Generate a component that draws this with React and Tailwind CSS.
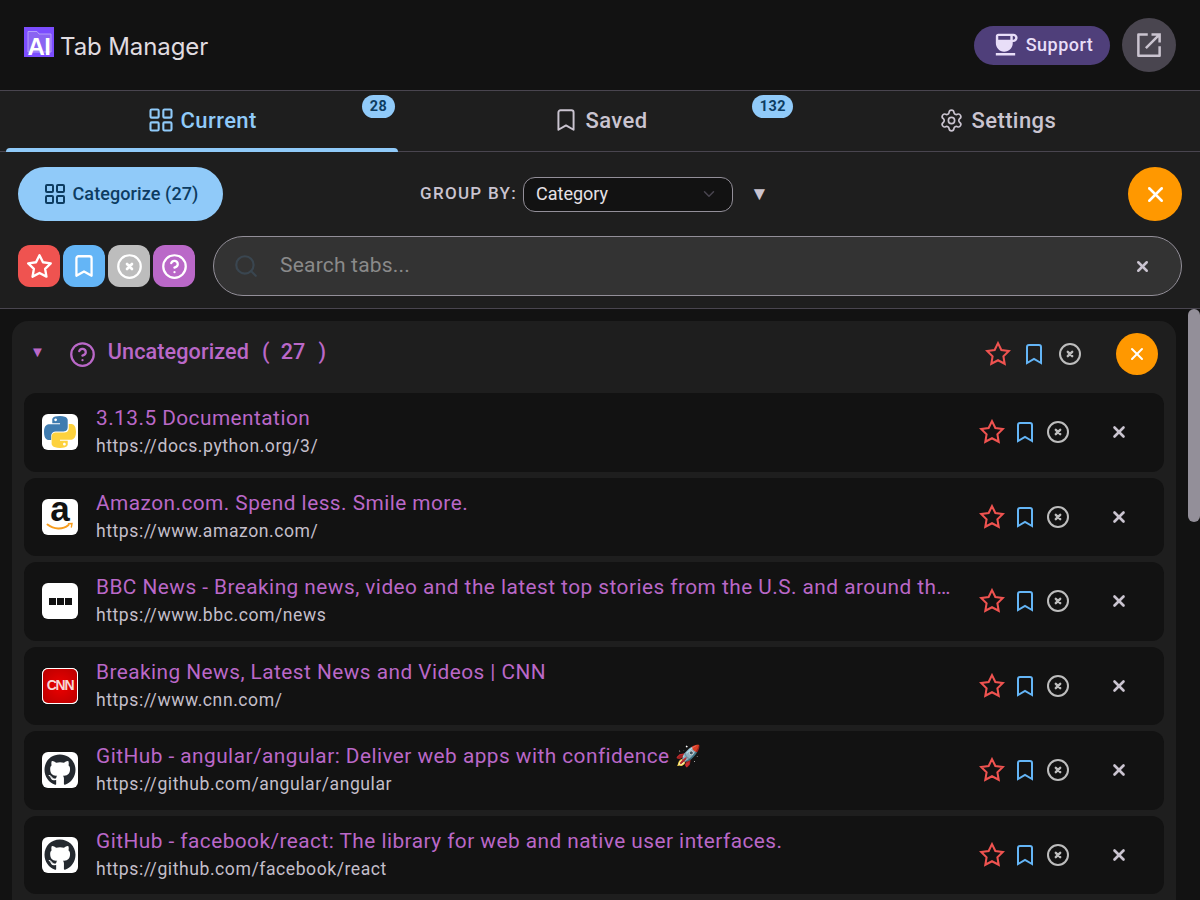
import { LayoutGrid, Bookmark, Settings, CircleHelp, Search, ChevronDown, X } from 'lucide-react';
import { MdCoffee } from 'react-icons/md';
import { FaGithub } from 'react-icons/fa';

// pointed five-corner star, the lucide one has rounded tips
function StarIcon({ className, join = 'miter', width = 1.9 }) {
  return (
    <svg viewBox="0 0 24 24" fill="none" stroke="currentColor" strokeWidth={width} strokeLinejoin={join} className={className}>
      <polygon points="12 2 15.09 8.26 22 9.27 17 14.14 18.18 21.02 12 17.77 5.82 21.02 7 14.14 2 9.27 8.91 8.26" />
    </svg>
  );
}

// circle with the small heavy x used for the "closed" filter
function CircleX({ className }) {
  return (
    <svg viewBox="0 0 24 24" fill="none" stroke="currentColor" strokeWidth="2" strokeLinecap="round" className={className}>
      <circle cx="12" cy="12" r="10" />
      <path d="M9.8 9.8l4.4 4.4M14.2 9.8l-4.4 4.4" strokeWidth="2.4" />
    </svg>
  );
}

function OpenIcon({ className }) {
  return (
    <svg viewBox="0 0 24 24" fill="none" stroke="currentColor" strokeWidth="2" className={className}>
      <path d="M11 3.5H3.5v17h17V13" strokeLinejoin="round" />
      <path d="M20.5 3.5L9.5 14.5M14 3.5h6.5V10" />
    </svg>
  );
}

function Logo() {
  return (
    <div className="relative w-[30px] h-[30px] mb-[6px] bg-[#7c4dff] shrink-0">
      <svg viewBox="0 0 30 30" className="absolute inset-0 w-full h-full" fill="none">
        <path d="M4 25V4.5h9l2 2.5h12v18z" fill="#8a63f2" stroke="#b39dfa" strokeWidth="1" />
      </svg>
      <span className="absolute left-0 right-0 bottom-[-1px] text-center font-['Liberation_Sans',sans-serif] font-bold text-[24px] leading-[22px] tracking-[-0.5px] text-white">AI</span>
    </div>
  );
}

function PythonIcon() {
  return (
    <svg viewBox="0 0 24 24" className="w-[32px] h-[32px]">
      <path fill="#3f7cb0" d="M11.914 0C5.82 0 6.2 2.656 6.2 2.656l.007 2.752h5.814v.826H3.9S0 5.789 0 11.969c0 6.18 3.403 5.96 3.403 5.96h2.03v-2.867s-.109-3.42 3.35-3.42h5.766s3.24.052 3.24-3.148V3.202S18.28 0 11.913 0zM8.708 1.85c.578 0 1.046.47 1.046 1.052 0 .581-.468 1.051-1.046 1.051-.579 0-1.046-.47-1.046-1.051 0-.582.467-1.052 1.046-1.052z" />
      <path fill="#fdd23e" d="M12.087 24c6.092 0 5.712-2.656 5.712-2.656l-.007-2.752h-5.814v-.826h8.123s3.9.445 3.9-5.735c0-6.18-3.404-5.96-3.404-5.96h-2.03v2.867s.109 3.42-3.35 3.42H8.95s-3.24-.052-3.24 3.148v5.292S5.72 24 12.087 24zm3.206-1.85a1.048 1.048 0 01-1.046-1.052c0-.581.468-1.051 1.046-1.051.579 0 1.046.47 1.046 1.051 0 .582-.467 1.052-1.046 1.052z" />
    </svg>
  );
}

function AmazonIcon() {
  return (
    <div className="relative w-full h-full">
      <span className="absolute left-0 right-0 top-0 text-center font-['Liberation_Sans',sans-serif] font-bold text-[35px] leading-[20px] text-[#111]">a</span>
      <svg viewBox="0 0 36 36" className="absolute inset-0 w-full h-full" fill="none">
        <path d="M5.5 25.5c6.5 5 15 5.5 21 .5" stroke="#f79c1c" strokeWidth="2" strokeLinecap="round" />
        <path d="M26.5 24.8l3.5-.3-.6 3.5" stroke="#f79c1c" strokeWidth="1.4" strokeLinecap="round" />
      </svg>
    </div>
  );
}

function BbcIcon() {
  return (
    <div className="w-full h-full flex items-center justify-center gap-[1px]">
      <div className="w-[7px] h-[7px] bg-[#111]" />
      <div className="w-[7px] h-[7px] bg-[#111]" />
      <div className="w-[7px] h-[7px] bg-[#111]" />
    </div>
  );
}

function CnnIcon() {
  return (
    <div className="w-full h-full p-[1px] rounded-md bg-white">
      <div className="w-full h-full rounded-[5px] bg-[radial-gradient(circle,#ee0000,#b80000)] flex items-center justify-center">
        <span className="font-['Liberation_Sans',sans-serif] font-bold text-[14px] tracking-[-1.2px] text-[#f6d5d5]">CNN</span>
      </div>
    </div>
  );
}

const tabs = [
  { title: '3.13.5 Documentation', url: 'https://docs.python.org/3/', icon: <PythonIcon /> },
  { title: 'Amazon.com. Spend less. Smile more.', url: 'https://www.amazon.com/', icon: <AmazonIcon /> },
  { title: 'BBC News - Breaking news, video and the latest top stories from the U.S. and around the world', url: 'https://www.bbc.com/news', icon: <BbcIcon /> },
  { title: 'Breaking News, Latest News and Videos | CNN', url: 'https://www.cnn.com/', icon: <CnnIcon /> },
  { title: 'GitHub - angular/angular: Deliver web apps with confidence 🚀', url: 'https://github.com/angular/angular', icon: <FaGithub className="w-[32px] h-[32px] text-[#24292f]" /> },
  { title: 'GitHub - facebook/react: The library for web and native user interfaces.', url: 'https://github.com/facebook/react', icon: <FaGithub className="w-[32px] h-[32px] text-[#24292f]" /> },
];

function TabRow({ tab }) {
  return (
    <div className="flex items-center h-[78.5px] shrink-0 rounded-xl bg-[#121212] pl-[18px] pr-[36px]">
      <div className="w-9 h-9 rounded-md bg-white flex items-center justify-center shrink-0">
        {tab.icon}
      </div>
      <div className="ml-[18px] min-w-0 w-[858px]">
        <div className="truncate text-[20.8px] leading-[28px] tracking-[0.47px] text-[#ba68c8]">{tab.title}</div>
        <div className="truncate text-[17.6px] leading-[28px] tracking-[0.55px] text-[#c4bfca]">{tab.url}</div>
      </div>
      <div className="ml-auto flex items-center">
        <StarIcon className="w-[26px] h-[26px] text-[#ef5350]" />
        <Bookmark className="w-6 h-6 ml-2 mr-[1px] text-[#64b5f6]" strokeWidth={2} strokeLinejoin="miter" />
        <CircleX className="w-6 h-6 ml-2 text-[#bdbdbd]" />
        <X className="w-[18px] h-[18px] ml-[40px] text-[#cac4d0]" strokeWidth={3.5} />
      </div>
    </div>
  );
}

export default function App() {
  return (
    <div className="relative w-[1200px] h-[900px] overflow-hidden bg-[#121212] font-[Roboto,sans-serif] flex flex-col">
      {/* Header */}
      <header className="h-[91px] shrink-0 flex items-center justify-between pl-6 pr-6 border-b border-[#49454f]">
        <div className="flex items-center gap-[6px]">
          <Logo />
          <span className="mt-[4px] font-[Inter,sans-serif] text-[24px] tracking-[-0.1px] text-[#e0dce0]">Tab Manager</span>
        </div>
        <div className="flex items-center gap-3">
          <button className="h-[39px] w-[136px] pb-[1px] rounded-full bg-[#4f3f7a] flex items-center justify-center gap-[6px] text-[#e8def8] text-[18px] font-medium tracking-[0.5px]">
            <MdCoffee className="w-[29px] h-[29px]" />
            Support
          </button>
          <button className="w-[54px] h-[54px] rounded-full bg-[#49454f] flex items-center justify-center text-[#cac4d0]">
            <OpenIcon className="w-[30px] h-[30px]" />
          </button>
        </div>
      </header>

      {/* Tabs */}
      <nav className="h-[61px] shrink-0 bg-[#1e1e1e] border-b border-[#49454f] grid grid-cols-3 px-1 gap-0">
        <div className="relative pb-[2px] pr-[2px] flex items-center justify-center gap-[6px] text-[22px] font-medium tracking-[0.4px] text-[#90caf9]">
          <LayoutGrid className="w-[28px] h-[28px]" strokeWidth={1.8} />
          Current
          <span className="absolute top-1 left-[358px] h-[23px] w-[33px] rounded-full bg-[#90caf9] text-[#0d3c61] text-[14.4px] font-bold flex items-center justify-center">28</span>
          <div className="absolute bottom-[-1px] left-[2px] right-[3px] h-[4px] rounded-t-[4px] bg-[#90caf9]" />
        </div>
        <div className="relative pb-[2px] flex items-center justify-center gap-[7px] text-[22px] font-medium tracking-[0.4px] text-[#cac4d0]">
          <Bookmark className="w-[26px] h-[26px]" strokeWidth={1.8} />
          Saved
          <span className="absolute top-1 left-[351px] h-[23px] w-[41px] rounded-full bg-[#90caf9] text-[#0d3c61] text-[14.4px] font-bold flex items-center justify-center">132</span>
        </div>
        <div className="pb-[2px] flex items-center justify-center gap-[8px] text-[22px] font-medium tracking-[0.4px] text-[#cac4d0]">
          <Settings className="w-[25px] h-[25px]" strokeWidth={1.6} />
          Settings
        </div>
      </nav>

      {/* Toolbar */}
      <section className="h-[157px] shrink-0 bg-[#1e1e1e] border-b border-[#49454f] px-[18px] pt-[15px]">
        <div className="flex items-center h-[54px]">
          <button className="w-[205px] h-[54px] pb-[1px] rounded-full bg-[#90caf9] text-[#0d3c61] flex items-center justify-center gap-[6px] text-[18px] font-medium tracking-[0.1px]">
            <LayoutGrid className="w-[24px] h-[24px]" strokeWidth={2} />
            Categorize (27)
          </button>
          <span className="ml-[197px] text-[17px] font-medium tracking-[1.3px] text-[#cac4d0]">GROUP BY:</span>
          <div className="ml-[6px] w-[210px] h-[35px] rounded-xl border border-[#938f99] bg-[#121212] flex items-center justify-between pl-3 pr-[14px] pb-[2px] text-[18px] text-[#e6e1e5]">
            Category
            <ChevronDown className="mt-[2px] w-[18px] h-[18px] text-[#49454f]" />
          </div>
          <span className="ml-[17px] text-[#cac4d0] text-[19px]">▼</span>
          <button className="ml-auto w-[54px] h-[54px] rounded-full bg-[#ff9800] flex items-center justify-center text-white">
            <X className="w-[25px] h-[25px]" strokeWidth={2.4} />
          </button>
        </div>
        <div className="flex items-center mt-[15px]">
          <div className="flex gap-[3px]">
            <div className="w-[42px] h-[42px] rounded-xl bg-[#ef5350] flex items-center justify-center text-white">
              <StarIcon className="w-[27px] h-[27px]" join="round" width={2.1} />
            </div>
            <div className="w-[42px] h-[42px] rounded-xl bg-[#64b5f6] flex items-center justify-center text-white">
              <Bookmark className="w-[26px] h-[26px]" strokeWidth={2.1} />
            </div>
            <div className="w-[42px] h-[42px] rounded-xl bg-[#bdbdbd] flex items-center justify-center text-white">
              <CircleX className="w-[27px] h-[27px]" />
            </div>
            <div className="w-[42px] h-[42px] rounded-xl bg-[#ba68c8] flex items-center justify-center text-white">
              <CircleHelp className="w-[27px] h-[27px]" strokeWidth={2} />
            </div>
          </div>
          <div className="ml-[18px] flex-1 h-[60px] rounded-full border border-[#938f99] bg-[#333333] flex items-center pl-[19px] pr-[30px]">
            <Search className="w-[26px] h-[26px] text-[#3a4650]" strokeWidth={2} />
            <span className="ml-[21px] text-[21px] tracking-[0.2px] text-[#8a8a8a]">Search tabs...</span>
            <X className="ml-auto w-[17px] h-[17px] text-[#cac4d0]" strokeWidth={3.5} />
          </div>
        </div>
      </section>

      {/* Tab list */}
      <main className="flex-1 min-h-0 overflow-hidden pt-3 pl-3 pr-6">
        <div className="rounded-2xl bg-[#1e1e1e] px-3 h-[900px]">
          <div className="h-[72px] pb-[6px] flex items-center text-[#ba68c8]">
            <span className="ml-[6px] mb-[4px] text-[15px]">▼</span>
            <CircleHelp className="ml-[24px] w-[27px] h-[27px]" strokeWidth={2} />
            <div className="mb-[4px] ml-[12px] flex items-center text-[21.6px] font-medium tracking-[0.1px]">
              <span>Uncategorized</span>
              <span className="ml-[13px]">(</span>
              <span className="ml-[11px]">27</span>
              <span className="ml-[13px]">)</span>
            </div>
            <div className="ml-auto mr-[6px] flex items-center">
              <StarIcon className="w-[26px] h-[26px] text-[#ef5350]" />
              <Bookmark className="w-6 h-6 ml-[11px] mr-[1px] text-[#64b5f6]" strokeWidth={2} strokeLinejoin="miter" />
              <CircleX className="w-6 h-6 ml-[11px] text-[#bdbdbd]" />
              <button className="ml-[34px] w-[42px] h-[42px] rounded-full bg-[#ff9800] flex items-center justify-center text-white">
                <X className="w-[20px] h-[20px]" strokeWidth={2.4} />
              </button>
            </div>
          </div>
          <div className="flex flex-col gap-[6px]">
            {tabs.map((tab) => (
              <TabRow key={tab.url} tab={tab} />
            ))}
          </div>
        </div>
      </main>

      {/* Scrollbar thumb */}
      <div className="absolute right-0 top-[309px] w-3 h-[213px] rounded-md bg-[#938f99]" />
    </div>
  );
}
